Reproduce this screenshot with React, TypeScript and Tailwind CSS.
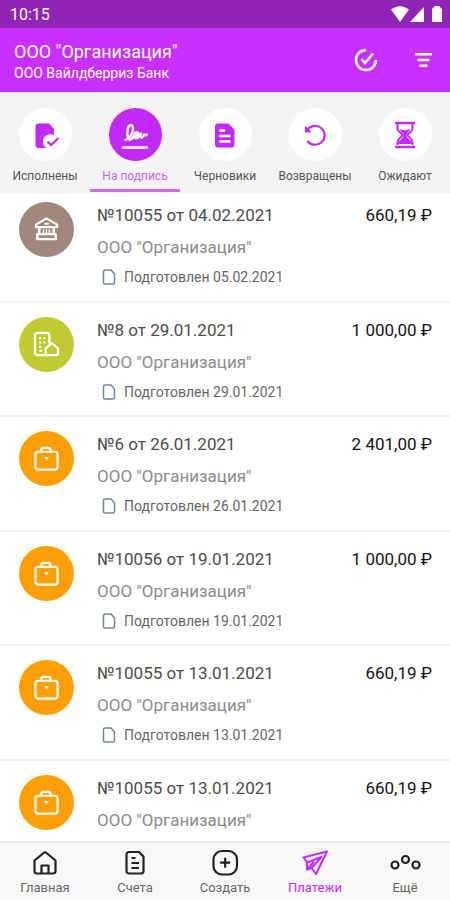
import type { ReactNode } from 'react';
import clsx from 'clsx';

type Kind = 'bank' | 'office' | 'case';

interface Payment {
  number: string;
  date: string;
  amount: string;
  prepared?: string;
  kind: Kind;
}

const payments: Payment[] = [
  { number: '№10055', date: '04.02.2021', amount: '660,19 ₽', prepared: '05.02.2021', kind: 'bank' },
  { number: '№8', date: '29.01.2021', amount: '1 000,00 ₽', prepared: '29.01.2021', kind: 'office' },
  { number: '№6', date: '26.01.2021', amount: '2 401,00 ₽', prepared: '26.01.2021', kind: 'case' },
  { number: '№10056', date: '19.01.2021', amount: '1 000,00 ₽', prepared: '19.01.2021', kind: 'case' },
  { number: '№10055', date: '13.01.2021', amount: '660,19 ₽', prepared: '13.01.2021', kind: 'case' },
  { number: '№10055', date: '13.01.2021', amount: '660,19 ₽', kind: 'case' },
];

const kindColors: Record<Kind, string> = {
  bank: 'bg-[#a1887f]',
  office: 'bg-[#c0ca33]',
  case: 'bg-[#ff9f05]',
};

const kindIcons: Record<Kind, ReactNode> = {
  bank: (
    <svg className="size-[27px]" viewBox="0 0 28 28" fill="none" stroke="currentColor" strokeWidth={2.2} strokeLinejoin="round" strokeLinecap="round" aria-hidden="true">
      <path d="M14 2.5 25 9v2.5H3V9z" />
      <path d="M6.5 12v6M21.5 12v6M4.5 18.8h19v5.2h-19z" strokeWidth={2.5} />
      <path d="M11 14.5v2.5M14 14.5v2.5M17 14.5v2.5" strokeWidth={1.5} />
      <path d="M12.5 8h3" strokeWidth={2} />
    </svg>
  ),
  office: (
    <svg className="size-[27px]" viewBox="0 0 28 28" fill="none" stroke="currentColor" strokeWidth={2.3} strokeLinejoin="round" strokeLinecap="round" aria-hidden="true">
      <path d="M14 25H5a3 3 0 0 1-3-3V5a3 3 0 0 1 3-3h9a3 3 0 0 1 3 3v7" />
      <path d="m13 18 6.5-5.500 6.500 5.500v5a2 2 0 0 1-2 2h-9a2 2 0 0 1-2-2z" />
      <path d="M7.3 7.5h.2M11.8 7.5h.2M7.3 12h.2M11.800 12h.2M7.3 16.500h.2M7.500 20.500h1" />
    </svg>
  ),
  case: (
    <svg className="size-[27px]" viewBox="0 0 28 28" fill="none" stroke="currentColor" strokeWidth={2.3} strokeLinejoin="round" strokeLinecap="round" aria-hidden="true">
      <rect x="2.5" y="7" width="23" height="18.5" rx="3" />
      <path d="M8.5 7V5a2 2 0 0 1 2-2H16a2 2 0 0 1 2 2v2" />
      <path d="M12.8 13.3h2.500l-1.200 1z" strokeWidth={1.8} />
    </svg>
  ),
};

const tabs: { label: string; icon: ReactNode; active?: boolean }[] = [
  {
    label: 'Исполнены',
    icon: (
      <svg className="size-8" viewBox="0 0 32 32" aria-hidden="true">
        <path d="M9.5 4.5H20l5 5.5v6.2A6.900 6.900 0 0 0 17.5 29h-8a3 3 0 0 1-3-3V7.500a3 3 0 0 1 3-3z" fill="currentColor" />
        <path d="m18.5 22.5 3.5 3.5 7.500-7" fill="none" stroke="currentColor" strokeWidth={2.3} />
      </svg>
    ),
  },
  {
    label: 'На подпись',
    active: true,
    icon: (
      <svg className="size-8" viewBox="0 0 32 32" fill="none" stroke="currentColor" strokeWidth={2.4} strokeLinecap="round" strokeLinejoin="round" aria-hidden="true">
        <path d="M6.5 21c4-1.500 7.500-7 7.500-11.500 0-4-4-4.500-5-.5-1 3.500-1 9 .8 11 1.700 1.500 3.700-.5 4.700-3 1-2.600 2.500-4.500 4-3.500 1.500 1.200-.5 3.500-3 3.800 0 2.500 3 3 5-.8l1.300-2c-.6 2.500-.2 4.500 1 4 1.200-.4 1.700-2.300 2.500-3 .7 1 1.200 1.300 2.500 0" />
        <path d="M4 28.5h24" />
      </svg>
    ),
  },
  {
    label: 'Черновики',
    icon: (
      <svg className="size-7" viewBox="0 0 28 28" aria-hidden="true">
        <path d="M7 2.5h10.5l6 6v15a3 3 0 0 1-3 3H7a3 3 0 0 1-3-3v-18a3 3 0 0 1 3-3z" fill="currentColor" />
        <path d="M8.5 9.5H14M8.5 15h11M8.5 20.5h11" fill="none" stroke="#fff" strokeWidth={2.3} />
      </svg>
    ),
  },
  {
    label: 'Возвращены',
    icon: (
      <svg className="size-7" viewBox="0 0 28 28" fill="none" stroke="currentColor" strokeWidth={2.2} aria-hidden="true">
        <path d="M6.5 8.5a9.5 9.5 0 1 1 0 11.500" />
        <path d="M4.500 5.500V11H10z" fill="currentColor" strokeWidth={1} />
      </svg>
    ),
  },
  {
    label: 'Ожидают',
    icon: (
      <svg className="size-7" viewBox="0 0 28 28" fill="none" stroke="currentColor" strokeWidth={2} aria-hidden="true">
        <path d="M4 2h20M4 26h20" strokeWidth={2.5} />
        <path d="M6.5 3v5c0 3 5 4 5 6s-5 3-5 7v3M21.5 3v5c0 3-5 4-5 6s5 3 5 7v3" />
        <path d="M9 8c2 1.500 8 1.500 10 0 0 2.500-3.500 3.500-3.500 6.500 0 3.500 5.500 4 5.500 8.500H7c0-4.500 5.500-5 5.500-8.500C12.500 11.500 9 10.500 9 8z" fill="currentColor" stroke="none" />
      </svg>
    ),
  },
];

const navItems: { label: string; icon: ReactNode; active?: boolean }[] = [
  {
    label: 'Главная',
    icon: (
      <svg className="size-7" viewBox="0 0 28 28" fill="none" stroke="currentColor" strokeWidth={2.2} strokeLinejoin="round" aria-hidden="true">
        <path d="M3.5 11.5 12.5 4a2.300 2.300 0 0 1 3 0l9 7.500V22a2.500 2.500 0 0 1-2.500 2.500H6A2.500 2.500 0 0 1 3.500 22z" />
        <path d="M10.5 24.5v-8h7v8" />
      </svg>
    ),
  },
  {
    label: 'Счета',
    icon: (
      <svg className="size-7" viewBox="0 0 28 28" fill="none" stroke="currentColor" strokeWidth={2.2} strokeLinejoin="round" aria-hidden="true">
        <path d="M8 3h10l4.500 4.500V22a2.500 2.500 0 0 1-2.500 2.500H8A2.500 2.500 0 0 1 5.500 22V5.500A2.500 2.500 0 0 1 8 3z" />
        <path d="M10.500 9h4M10.500 14h7.500M10.500 19h7.500" />
      </svg>
    ),
  },
  {
    label: 'Создать',
    icon: (
      <svg className="size-7" viewBox="0 0 28 28" fill="none" stroke="currentColor" strokeWidth={2.2} aria-hidden="true">
        <rect x="2.5" y="2" width="23.5" height="23.5" rx="8.5" />
        <path d="M14.2 8.7v10M9.2 13.700h10" />
      </svg>
    ),
  },
  {
    label: 'Платежи',
    active: true,
    icon: (
      <svg className="size-7" viewBox="0 0 28 28" fill="none" stroke="currentColor" strokeWidth={2} strokeLinejoin="round" aria-hidden="true">
        <path d="M26 2.5 2.5 8.5l3.5 5v7l4.500-1.500 4.500 6z" />
        <path d="M6 13.5 20.5 8l-10 11M6 20.500l7-8" />
      </svg>
    ),
  },
  {
    label: 'Ещё',
    icon: (
      <svg className="h-7 w-8" viewBox="0 0 32 28" fill="none" stroke="currentColor" strokeWidth={2.2} aria-hidden="true">
        <circle cx="6" cy="16" r="3.5" />
        <circle cx="16.5" cy="10.5" r="3.5" />
        <circle cx="27" cy="16" r="3.5" />
      </svg>
    ),
  },
];

function StatusBar() {
  return (
    <div className="flex h-7 shrink-0 items-center justify-between bg-[#9125b8] pl-[10px] pr-2 text-white">
      <span className="pt-[2px] text-base">10:15</span>
      <div className="flex items-center">
        <svg className="h-4 w-[18px]" viewBox="0 0 18 16" fill="currentColor" aria-hidden="true">
          <path d="M0 3.500Q9-3.500 18 3.500L9 16z" />
        </svg>
        <svg className="ml-px h-4 w-[14px]" viewBox="0 0 14 16" fill="currentColor" aria-hidden="true">
          <path d="M14 1v15H0z" />
        </svg>
        <svg className="ml-2 h-4 w-[10px]" viewBox="0 0 10 16" fill="currentColor" aria-hidden="true">
          <path d="M3 0h4l3 3v13H0V3z" />
        </svg>
      </div>
    </div>
  );
}

function Header() {
  return (
    <header className="flex h-16 shrink-0 items-center justify-between bg-[#c930ff] pl-[14px] pr-[17px] text-white">
      <div className="pt-[2px]">
        <h1 className="text-[18px] leading-6">ООО "Организация"</h1>
        <p className="text-[14px] leading-[18px]">ООО Вайлдберриз Банк</p>
      </div>
      <div className="flex items-center gap-[35px]">
        <button type="button" aria-label="Выбрать">
          <svg className="size-6" viewBox="0 0 24 24" fill="none" stroke="currentColor" strokeWidth={2.5} aria-hidden="true">
            <path d="M12 2a10 10 0 1 0 10 10" />
            <path d="m7.500 11 3.500 4 8-9.500" />
          </svg>
        </button>
        <button type="button" aria-label="Фильтр">
          <svg className="size-5" viewBox="0 0 20 20" fill="none" stroke="currentColor" strokeWidth={2.6} aria-hidden="true">
            <path d="M2 4.3h17M4.500 10h12M6.500 15.700h8" />
          </svg>
        </button>
      </div>
    </header>
  );
}

function Tabs() {
  return (
    <nav className="grid h-[102px] shrink-0 grid-cols-5 bg-[#f4f4f4] pb-[2px]">
      {tabs.map((tab) => (
        <button
          key={tab.label}
          type="button"
          className={clsx(
            'flex flex-col items-center border-b-[3px] pt-4',
            tab.active ? 'border-[#cb6bf4] text-[#c668ee]' : 'border-transparent text-[#555]'
          )}
        >
          <span
            className={clsx(
              'flex size-[53px] items-center justify-center rounded-full',
              tab.active ? 'bg-[#c22bf7] text-white' : 'bg-white text-[#c22bf7]'
            )}
          >
            {tab.icon}
          </span>
          <span className="mt-[7px] whitespace-nowrap text-[12px] leading-4">{tab.label}</span>
        </button>
      ))}
    </nav>
  );
}

function PaymentRow({ payment }: { payment: Payment }) {
  return (
    <li className="flex h-[115px] shrink-0 border-b-2 border-[#f3f3f3] pl-[19px] pr-[18px] pt-[14px] first:h-[109px] first:pt-2 last:border-0 even:h-[114px]">
      <div className={clsx('flex size-[55px] shrink-0 items-center justify-center rounded-full text-white', kindColors[payment.kind])}>
        {kindIcons[payment.kind]}
      </div>
      <div className="ml-[23px] min-w-0 flex-1">
        <div className="flex justify-between text-[17px] leading-[26px]">
          <span className="text-[#4c4c4c]">
            {payment.number} от {payment.date}
          </span>
          <span className="text-[#141414]">{payment.amount}</span>
        </div>
        <p className="mt-[6px] text-[17px] leading-[26px] text-[#8c8c8c]">ООО "Организация"</p>
        {payment.prepared && (
          <div className="mt-[7px] flex items-center gap-[8px] pl-[5px]">
            <svg className="h-4 w-[14px] text-[#6f8795]" viewBox="0 0 14 16" fill="none" stroke="currentColor" strokeWidth={1.5} strokeLinejoin="round" aria-hidden="true">
              <path d="M3 1h6l3.500 4v8.500A1.500 1.500 0 0 1 11 15H3a1.500 1.500 0 0 1-1.500-1.500v-11A1.500 1.500 0 0 1 3 1z" />
            </svg>
            <span className="text-[14px] leading-[20px] text-[#666]">Подготовлен {payment.prepared}</span>
          </div>
        )}
      </div>
    </li>
  );
}

function BottomNav() {
  return (
    <nav className="grid h-[59px] shrink-0 grid-cols-5 border-t-2 border-[#ebebeb] bg-[#f8f8f8]">
      {navItems.map((item) => (
        <a
          key={item.label}
          href="#"
          className={clsx('flex flex-col items-center pt-[6px]', item.active ? 'text-[#c22bf7]' : 'text-[#222]')}
        >
          {item.icon}
          <span className={clsx('mt-px text-[13px] leading-5', !item.active && 'text-[#666]')}>{item.label}</span>
        </a>
      ))}
    </nav>
  );
}

export default function App() {
  return (
    <div className="flex h-screen flex-col overflow-hidden bg-white font-[Roboto,sans-serif]">
      <StatusBar />
      <Header />
      <Tabs />
      <ul className="flex min-h-0 flex-1 flex-col overflow-hidden">
        {payments.map((payment, i) => (
          <PaymentRow key={i} payment={payment} />
        ))}
      </ul>
      <BottomNav />
    </div>
  );
}
